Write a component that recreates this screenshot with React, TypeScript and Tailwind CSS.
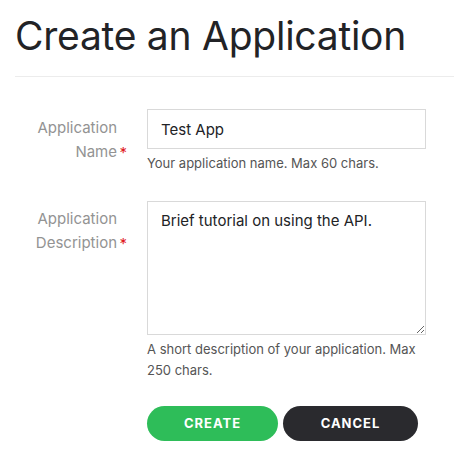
import React from "react";

function Label({ children, top }: { children: React.ReactNode; top: string }) {
  return (
    <div className={`w-[117px] shrink-0 pr-[15px] ${top}`}>
      <label className="relative block text-right text-[15px] leading-[24px] text-[#939393]">
        {children}
        <span className="absolute -right-[10px] bottom-[2px] text-[15px] leading-[18px] text-[#e0181e]">*</span>
      </label>
    </div>
  );
}

export default function App() {
  return (
    <div className="min-h-[464px] w-[454px] bg-white pl-[15px] font-['Inter','Noto_Sans',sans-serif]">
      <h1 className="pt-[14px] pb-[18px] text-[39px] leading-[44px] font-normal tracking-[-0.25px] text-[#222326]">
        Create an Application
      </h1>
      <div className="h-px bg-[#ececec]" />

      <form className="mt-[32px] flex flex-col">
        <div className="flex">
          <Label top="pt-[7px]">Application Name</Label>
          <div className="ml-[15px] flex flex-col">
            <input
              defaultValue="Test App"
              className="h-[40px] w-[279px] border border-[#d9d9d9] px-[13px] text-[15px] text-[#222326] outline-none"
            />
            <p className="mt-[4px] text-[13px] leading-[21px] text-[#555]">
              Your application name. Max 60 chars.
            </p>
          </div>
        </div>

        <div className="mt-[27px] flex">
          <Label top="pt-[6px]">Application Description</Label>
          <div className="ml-[15px] flex flex-col">
            <textarea
              defaultValue="Brief tutorial on using the API."
              className="h-[134px] w-[279px] resize border border-[#d9d9d9] px-[13px] py-[8px] text-[15px] leading-[22px] text-[#222326] outline-none"
            />
            <p className="mt-[4px] w-[270px] text-[13px] leading-[21px] text-[#555]">
              A short description of your application. Max 250 chars.
            </p>
            <div className="mt-[25px] flex gap-[5px]">
              <button
                type="button"
                className="h-[35px] w-[131px] rounded-full bg-[#2ebd59] text-[13px] font-bold tracking-[1px] text-white"
              >
                CREATE
              </button>
              <button
                type="button"
                className="h-[35px] w-[135px] rounded-full bg-[#2a2a2e] text-[13px] font-bold tracking-[1px] text-white"
              >
                CANCEL
              </button>
            </div>
          </div>
        </div>
      </form>
    </div>
  );
}
